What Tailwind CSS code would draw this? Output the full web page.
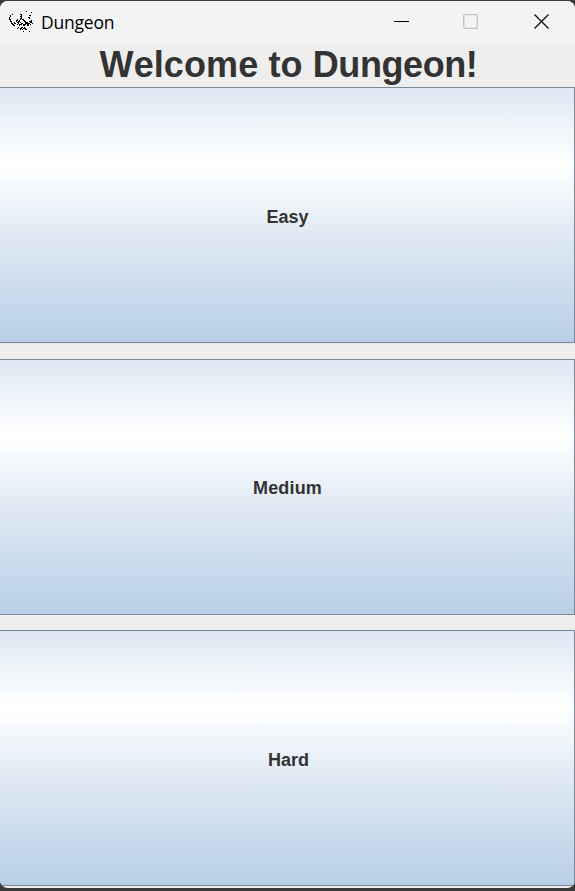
<!DOCTYPE html>
<html lang="en">
<head>
<meta charset="utf-8">
<title>Dungeon</title>
<script src="https://cdn.jsdelivr.net/npm/@tailwindcss/browser@4"></script>
</head>
<body class="h-[891px] w-[575px] overflow-hidden bg-[#3a3a3a] pt-px font-['Liberation_Sans',Arial,sans-serif] text-[#333333]">
<div class="flex h-[887px] flex-col overflow-hidden rounded-[8px] bg-[#eeeeee]">
  <header class="flex h-[43px] shrink-0 items-center bg-[#f3f3f3] pb-[2px] pl-[9px] text-black">
    <svg class="mt-[2px] h-6 w-6 shrink-0" viewBox="0 0 24 24" fill="none" stroke="#000" shape-rendering="crispEdges">
      <path d="M17 .5h1M22 1.500h1M3 3.5h1M11 3.5h2M1 4.5h1M12 4.5h1M20 4.5h2M1 5.5h1M11 5.5h2M0 6.5h1M12 6.5h1M19 6.5h2M0 7.5h1M11 7.5h2M20 7.5h1M0 8.5h2M8 8.5h1M11 8.5h1M13 8.5h2M1 9.5h1M7 9.5h2M10 9.5h1M14 9.5h2M22 9.5h1M1 10.5h2M7 10.5h1M9 10.5h2M15 10.5h2M20 10.5h3M2 11.5h1M5 11.5h1M8 11.5h2M11 11.5h1M16 11.5h3M21 11.5h2M2 12.5h2M5 12.5h2M9 12.5h1M12 12.5h2M16 12.5h5M23 12.5h1M3 13.5h2M8 13.5h1M10 13.5h3M14 13.5h3M18 13.5h2M21 13.5h1M4 14.5h2M10 14.5h1M14 14.5h2M18 14.5h2M9 16.5h1M12 16.5h2M15 16.5h1M8 17.5h1M11 17.5h2M14 17.5h3M11 18.5h1M13 18.5h1M16 18.5h2M14 20.5h1M20 20.5h1"/>
    </svg>
    <h1 class="ml-[8px] font-['Open_Sans','Noto_Sans',sans-serif] text-[17.5px] leading-6 tracking-[-0.2px]">Dungeon</h1>
    <div class="mr-[25px] ml-auto flex items-center">
      <svg class="mr-[53px] h-4 w-4" viewBox="0 0 16 16" stroke="#000" shape-rendering="crispEdges"><path d="M0 7.5h15"/></svg>
      <svg class="mr-[55px] h-4 w-4" viewBox="0 0 16 16" fill="none" stroke="#c3c3c3" stroke-width="1.3"><rect x=".7" y=".7" width="13.600" height="13.600" rx="1"/></svg>
      <svg class="h-4 w-4" viewBox="0 0 16 16" fill="none" stroke="#111" stroke-width="1.4"><path d="M.5.5l14 14M14.500.5l-14 14"/></svg>
    </div>
  </header>
  <h2 class="h-[43px] shrink-0 pl-[2px] text-center text-[36px] leading-[41px] font-bold tracking-[0.1px] whitespace-nowrap [font-kerning:none]">Welcome to <span class="tracking-[-0.4px]">Dungeon!</span></h2>
  <main class="flex flex-col">
    <button class="mb-[16px] h-[256px] border-y border-r border-[#7a8a99] bg-[linear-gradient(#dde8f3_0%,#fff_30%,#dde8f3_60%,#b8cfe5_100%)] pt-[5px] pl-[1px] text-[18px] font-bold shadow-[0_1px_0_#dde5ed]">Easy</button>
    <button class="mb-[15px] h-[256px] border-y border-r border-[#7a8a99] bg-[linear-gradient(#dde8f3_0%,#fff_30%,#dde8f3_60%,#b8cfe5_100%)] pt-[3px] pl-[1px] text-[18px] font-bold tracking-[0.15px]">Medium</button>
    <button class="h-[256px] border-y border-r border-[#7a8a99] bg-[linear-gradient(#dde8f3_0%,#fff_30%,#dde8f3_60%,#b8cfe5_100%)] pt-[5px] pl-[3px] text-[18px] font-bold">Hard</button>
  </main>
</div>
</body>
</html>
